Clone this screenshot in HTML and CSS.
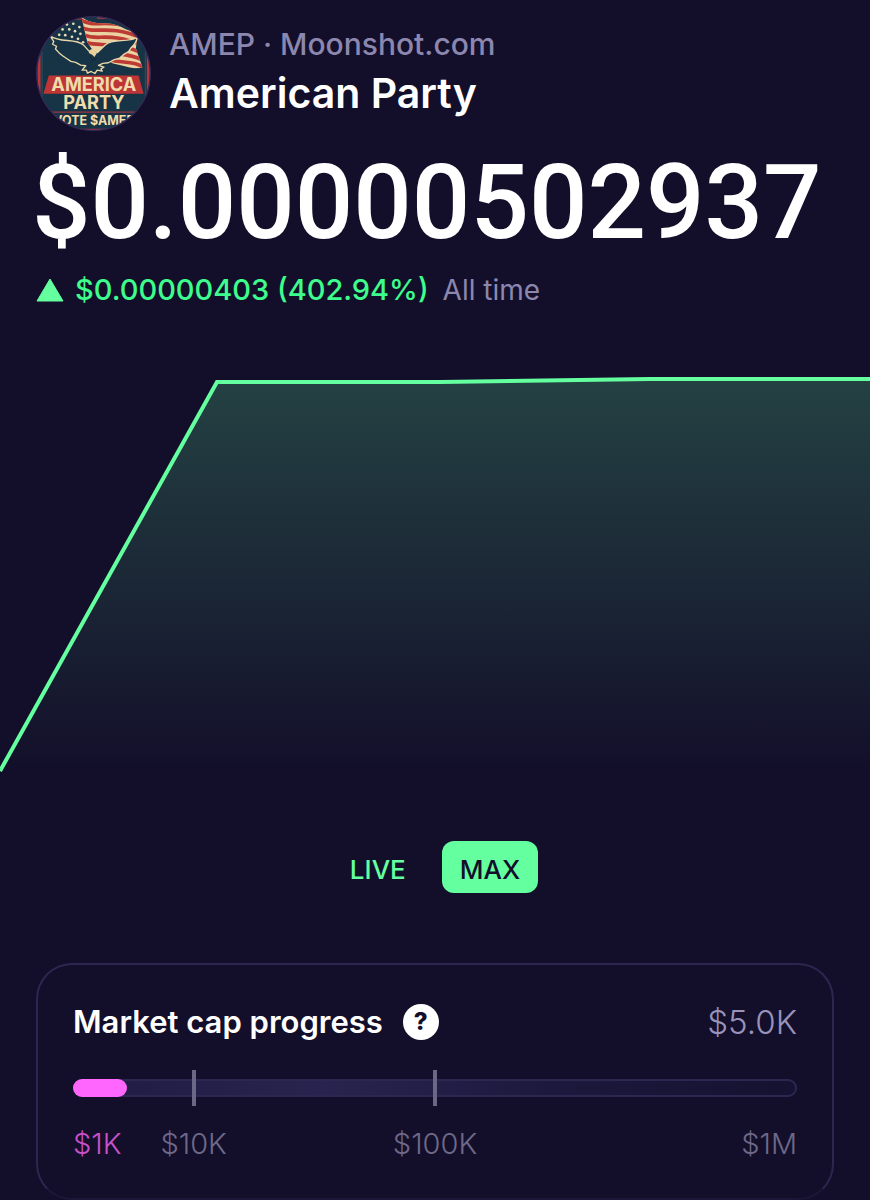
FILE: index.html
```html
<!DOCTYPE html>
<html lang="en">
<head>
<meta charset="utf-8">
<meta name="viewport" content="width=device-width, initial-scale=1">
<title>American Party</title>
<link rel="stylesheet" href="styles.css">
</head>
<body>
<main class="page">
  <header class="token">
    <svg class="avatar" viewBox="33 33 342 342" role="img" aria-label="America Party logo">
      <defs>
        <clipPath id="disc"><circle cx="204" cy="204" r="170"/></clipPath>
        <clipPath id="flag"><path d="M168 36C200 60 228 52 256 56C290 62 300 78 335 82L330 130L350 187C318 192 296 180 262 174L205 140L186 112Z"/></clipPath>
      </defs>
      <g clip-path="url(#disc)">
        <rect x="33" y="33" width="342" height="342" fill="#173446"/>
        <path d="M110 41H168M215 38H300" stroke="#b23a3a" stroke-width="6"/>
        <path d="M42 150V270M367 150V270" stroke="#b8353a" stroke-width="9"/>
        <path d="M51 140V280M358 140V280" stroke="#2a5262" stroke-width="3"/>
        <g clip-path="url(#flag)">
          <rect x="160" y="36" width="200" height="160" fill="#ead3a0"/>
          <g fill="none" stroke="#bd3a35" stroke-width="11">
            <path d="M168 46C210 70 250 36 340 78"/>
            <path d="M172 68C210 88 250 56 345 98"/>
            <path d="M178 90C214 108 250 78 350 120"/>
            <path d="M184 112C220 126 260 104 350 144"/>
            <path d="M240 138C270 148 310 142 355 166"/>
            <path d="M250 162C290 176 320 162 360 190"/>
          </g>
        </g>
        <g fill="#e9dcb8">
          <circle cx="125" cy="58" r="4"/><circle cx="144" cy="56" r="4"/><circle cx="162" cy="66" r="4"/>
          <circle cx="112" cy="73" r="4"/><circle cx="132" cy="73" r="4"/><circle cx="149" cy="78" r="4"/>
          <circle cx="102" cy="89" r="4"/><circle cx="120" cy="90" r="4"/><circle cx="140" cy="95" r="4"/>
          <circle cx="165" cy="86" r="4"/><circle cx="158" cy="101" r="4"/><circle cx="173" cy="111" r="4"/>
        </g>
        <path d="M75 92C105 114 150 98 174 119L192 139C198 130 211 132 215 142L239 119C263 98 303 114 335 97C330 113 324 121 316 127L308 139L293 148L282 158L266 163L248 172L232 174L219 180L235 185L226 190L230 197L215 194L208 204L197 198L186 203L183 194L170 194L181 181L166 179L151 171L137 168L125 160L112 151L101 142L91 131L94 123L82 117L86 109Z" fill="#173446" stroke="#ead9aa" stroke-width="4" stroke-linejoin="round"/>
        <path d="M190 143C192 130 209 129 214 143L207 155L200 148Z" fill="#ead09a"/>
        <path d="M195 153C199 166 207 168 213 158" fill="none" stroke="#0e2836" stroke-width="3"/>
        <path d="M71 210H338L353 264H55Z" fill="#bd3535"/>
        <path d="M60 319H350" stroke="#9b3440" stroke-width="4"/>
        <g class="logo-text" fill="#efdcab" text-anchor="middle">
          <text x="205" y="256" font-size="54">AMERICA</text>
          <text x="205" y="311" font-size="54">PARTY</text>
          <text x="205" y="357" font-size="37">VOTE $AMEP</text>
        </g>
        <path d="M80 370H325" stroke="#a43240" stroke-width="4"/>
      </g>
      <circle cx="204" cy="204" r="169" fill="none" stroke="#332957" stroke-width="4"/>
    </svg>
    <div class="token-text">
      <p class="ticker">AMEP · Moonshot.com</p>
      <h1 class="name">American Party</h1>
    </div>
  </header>

  <p class="price">$0.00000502937</p>
  <p class="change">
    <svg class="up" viewBox="0 0 28 24" aria-hidden="true"><path d="M14 1L27 23H1Z" stroke-width="1" stroke-linejoin="round"/></svg>
    <span class="delta">$0.00000403 (402.94%)</span>
    <span class="period">All time</span>
  </p>

  <svg class="chart" viewBox="0 0 870 420" preserveAspectRatio="none" role="img" aria-label="All time price chart">
    <defs>
      <linearGradient id="fade" x1="0" y1="0" x2="0" y2="1">
        <stop offset="0" stop-color="#64ff9f" stop-opacity=".21"/>
        <stop offset="1" stop-color="#64ff9f" stop-opacity="0"/>
      </linearGradient>
    </defs>
    <path d="M0 410L217 22H440L650 19H870V410Z" fill="url(#fade)"/>
    <path class="line" d="M0 411L217 22H440L650 19H880"/>
  </svg>

  <div class="ranges">
    <button class="range" type="button">LIVE</button>
    <button class="range selected" type="button" aria-pressed="true">MAX</button>
  </div>

  <section class="card">
    <div class="card-head">
      <h2 class="card-title">Market cap progress</h2>
      <button class="help" type="button" aria-label="About market cap progress">?</button>
      <span class="cap">$5.0K</span>
    </div>
    <div class="meter">
      <div class="track" role="progressbar" aria-label="Market cap progress" aria-valuenow="5000" aria-valuemin="1000" aria-valuemax="1000000"><div class="fill" style="width:7.5%"></div></div>
      <div class="ticks scale"><i class="tick first"></i><i class="tick second"></i></div>
    </div>
    <div class="labels scale">
      <span class="reached">$1K</span><span class="mid">$10K</span><span class="mid">$100K</span><span class="last">$1M</span>
    </div>
  </section>
</main>
</body>
</html>
```

FILE: styles.css
```css
* { box-sizing: border-box; }
body {
  margin: 0;
  background: #130f2a;
  color: #fff;
  font-family: Inter, "Liberation Sans", sans-serif;
}
h1, h2, p { margin: 0; }
button { border: 0; padding: 0; background: none; font: inherit; cursor: pointer; }

.page { padding-top: 16px; }

.token { display: flex; gap: 18px; padding: 0 36px; }
.avatar { width: 115px; height: 115px; flex: none; }
.logo-text { font-weight: 700; }
.token-text { padding-top: 8px; }
.ticker { font-size: 30px; line-height: 40px; font-weight: 500; color: #8c87ae; }
.name { font-size: 41px; line-height: 58px; font-weight: 600; }

.price {
  padding: 0 32px;
  margin-top: 12px;
  font-family: Roboto, Inter, sans-serif;
  font-size: 103px;
  line-height: 120px;
  font-weight: 500;
  white-space: nowrap;
}

.change {
  display: flex;
  align-items: center;
  margin-top: 9px;
  padding: 0 36px;
  font-size: 28px;
  line-height: 36px;
  white-space: nowrap;
}
.up { width: 28px; height: 24px; margin-right: 11px; fill: #64ff9f; stroke: #64ff9f; }
.delta { color: #3dfd8d; font-size: 29px; font-weight: 500; margin-right: 14px; }
.period { color: #8c87ae; }

.chart { display: block; width: 100%; height: 420px; margin-top: 52px; }
.line { fill: none; stroke: #64ff9f; stroke-width: 4px; vector-effect: non-scaling-stroke; }

.ranges { display: flex; justify-content: center; gap: 18px; margin-top: 61px; }
.range {
  padding: 6px 18px 0;
  border-radius: 12px;
  color: #64ff9f;
  font-size: 26px;
  line-height: 46px;
  font-weight: 500;
}
.range.selected { background: #64ff9f; color: #130f2a; }

.card {
  margin: 70px 36px 0;
  padding: 37px 35px 36px;
  border: 2px solid #2c2750;
  border-bottom-color: #1c1739;
  border-radius: 36px;
}
.card-head { display: flex; align-items: center; line-height: 40px; }
.card-title { font-size: 31px; line-height: 40px; font-weight: 600; }
.help {
  width: 36px;
  height: 36px;
  margin-left: 20px;
  border-radius: 50%;
  background: #fff;
  color: #130f2a;
  font-size: 24px;
  line-height: 36px;
  font-weight: 800;
}
.cap { margin-left: auto; font-size: 33px; font-weight: 300; color: #9893bb; }

.meter { display: grid; align-items: center; margin-top: 28px; }
.track, .ticks { grid-area: 1 / 1; }
.track {
  height: 18px;
  border-radius: 9px;
  background: linear-gradient(90deg, #1f1b42, #29244f 35%, #1e1a40 60%, #151130);
  box-shadow: inset 0 0 0 2px #2c2750;
}
.fill { height: 100%; border-radius: 9px; background: #ff66fd; }
.scale { display: grid; grid-template-columns: 1fr 2fr 6fr 3fr; }
.tick { justify-self: center; width: 4px; height: 36px; background: #6b6784; }
.first { grid-column: 2; }
.second { grid-column: 3; }

.labels { margin-top: 20px; font-size: 29px; line-height: 36px; font-weight: 300; color: #6e6989; }
.reached { color: #c951cd; }
.mid { text-align: center; }
.last { text-align: right; }
```
